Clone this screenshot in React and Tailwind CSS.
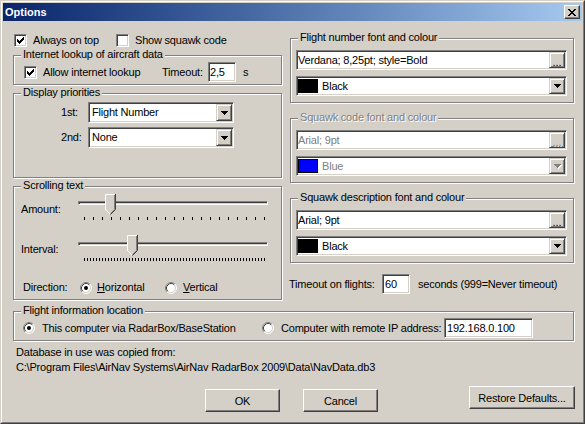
const SUNKEN =
  "bg-white border border-t-[#808080] border-l-[#808080] border-r-white border-b-white shadow-[inset_1px_1px_0_#404040,inset_-1px_-1px_0_#D4D0C8]";
const RAISED_SMALL =
  "bg-[#D4D0C8] border border-t-[#D4D0C8] border-l-[#D4D0C8] border-r-[#404040] border-b-[#404040] shadow-[inset_1px_1px_0_#fff,inset_-1px_-1px_0_#808080]";
const BUTTON =
  "bg-[#D4D0C8] border border-t-white border-l-white border-r-[#404040] border-b-[#404040] shadow-[inset_-1px_-1px_0_#808080]";

function Check({ checked }) {
  return (
    <div className="w-[13px] h-[13px] shrink-0 bg-white border border-t-[#808080] border-l-[#808080] border-r-white border-b-white shadow-[inset_1px_1px_0_#404040,inset_-1px_-1px_0_#D4D0C8]">
      {checked && (
        <svg width="11" height="11" viewBox="0 0 11 11" shapeRendering="crispEdges" className="block">
          <path
            d="M2 4h1v3h-1z M3 5h1v3h-1z M4 6h1v3h-1z M5 5h1v3h-1z M6 4h1v3h-1z M7 3h1v3h-1z M8 2h1v3h-1z"
            fill="#000"
          />
        </svg>
      )}
    </div>
  );
}

function Radio({ checked }) {
  return (
    <svg width="12" height="12" viewBox="0 0 12 12" className="shrink-0 block">
      <circle cx="6" cy="6" r="5" fill="#fff" />
      <path d="M2.11 9.89A5.5 5.5 0 0 1 9.89 2.11" stroke="#808080" fill="none" />
      <path d="M9.89 2.11A5.5 5.5 0 0 1 2.11 9.89" stroke="#fff" fill="none" />
      <path d="M2.82 9.18A4.5 4.5 0 0 1 9.18 2.82" stroke="#404040" fill="none" />
      <path d="M9.18 2.82A4.5 4.5 0 0 1 2.82 9.18" stroke="#D4D0C8" fill="none" />
      {checked && <circle cx="6" cy="6" r="2" fill="#000" />}
    </svg>
  );
}

function Arrow({ disabled }) {
  const d = "M0 0h7v1h-7z M1 1h5v1h-5z M2 2h3v1h-3z M3 3h1v1h-1z";
  return (
    <svg width="8" height="5" viewBox="0 0 8 5" shapeRendering="crispEdges" className="block">
      {disabled && <path d={d} fill="#fff" transform="translate(1 1)" />}
      <path d={d} fill={disabled ? "#808080" : "#000"} />
    </svg>
  );
}

function DropBtn({ disabled }) {
  return (
    <div className={`${RAISED_SMALL} w-[16px] self-stretch flex items-center justify-center pl-[1px] pt-[1px]`}>
      <Arrow disabled={disabled} />
    </div>
  );
}

function Group({ label, className, disabled, children }) {
  return (
    <div
      className={`relative border border-[#808080] shadow-[inset_1px_1px_0_#fff,1px_1px_0_#fff] ${className}`}
    >
      <span
        className={`absolute left-[7px] top-[-8px] px-[2px] bg-[#D4D0C8] leading-[13px] whitespace-nowrap ${
          disabled ? "text-[#808080] [text-shadow:1px_1px_0_#fff]" : ""
        }`}
      >
        {label}
      </span>
      {children}
    </div>
  );
}

function Edit({ className, children }) {
  return <div className={`${SUNKEN} flex items-center pl-[1px] ${className}`}>{children}</div>;
}

function Combo({ className, children }) {
  return (
    <div className={`${SUNKEN} p-[1px] flex items-center ${className}`}>
      <span className="flex-1 pl-[2px]">{children}</span>
      <DropBtn />
    </div>
  );
}

function FontGroup({ label, className, disabled, text, swatch, colorName }) {
  return (
    <Group label={label} className={`h-[65px] ${className}`} disabled={disabled}>
      <div className="pt-[11px] pl-[5px] flex flex-col">
        <div className={`${SUNKEN} w-[271px] h-[20px] p-[1px] flex items-center`}>
          <span className={`flex-1 ${disabled ? "text-[#808080]" : ""}`}>{text}</span>
          <div className={`${RAISED_SMALL} w-[16px] self-stretch flex items-end justify-center pb-[1px]`}>
            <span
              className={`leading-[8px] tracking-[0px] ${
                disabled ? "text-[#808080] [text-shadow:1px_1px_0_#fff]" : ""
              }`}
            >
              ...
            </span>
          </div>
        </div>
        <div className={`${SUNKEN} mt-[6px] w-[271px] h-[20px] p-[1px] flex items-center`}>
          <div className={`w-[20px] h-[14px] border border-black ${swatch}`} />
          <span className={`ml-[4px] flex-1 ${disabled ? "text-[#808080]" : ""}`}>{colorName}</span>
          <DropBtn disabled={disabled} />
        </div>
      </div>
    </Group>
  );
}

function Thumb({ className }) {
  return (
    <svg width="11" height="21" viewBox="0 0 11 21" className={`absolute top-0 block ${className}`}>
      <path d="M0 0H11V16L5.5 21L0 16Z" fill="#D4D0C8" />
      <path d="M0.5 16V0.5H10" stroke="#fff" fill="none" />
      <path d="M0.5 15.5L5 20" stroke="#fff" fill="none" />
      <path d="M10.5 0V15.5L5.5 20.5" stroke="#404040" fill="none" />
      <path d="M9.5 1V15.5L5.5 19.5" stroke="#808080" fill="none" />
    </svg>
  );
}

function Slider({ thumbClass, ticks }) {
  return (
    <div className="relative w-[190px] h-[27px] flex flex-col">
      <div className="mt-[7px] h-[4px] w-full border border-t-[#808080] border-l-[#808080] border-r-white border-b-white shadow-[inset_1px_1px_0_#404040]" />
      <div className="mt-[12px] ml-[6px] w-[181px] flex justify-between">
        {Array.from({ length: ticks }).map((_, i) => (
          <div key={i} className="w-[1px] h-[3px] bg-black" />
        ))}
      </div>
      <Thumb className={thumbClass} />
    </div>
  );
}

export default function App() {
  return (
    <div className="w-[585px] h-[424px] bg-[#D4D0C8] border border-t-[#D4D0C8] border-l-[#D4D0C8] border-r-[#404040] border-b-[#404040] font-['Liberation_Sans',Arial,sans-serif] text-[11px] leading-[13px] tracking-[-0.2px] text-black overflow-hidden">
      <div className="h-full border border-t-white border-l-white border-r-[#808080] border-b-[#808080] p-[1px] flex flex-col">
        {/* Title bar */}
        <div className="h-[18px] shrink-0 flex items-center bg-linear-to-r from-[#0A246A] to-[#A6CAF0] pl-[2px] pr-[2px]">
          <span className="flex-1 font-bold text-white tracking-normal">Options</span>
          <div className={`${BUTTON} w-[16px] h-[14px] flex items-center justify-center`}>
            <svg width="8" height="7" viewBox="0 0 8 7" shapeRendering="crispEdges" className="block">
              <path
                d="M0 0h2v1h-2z M6 0h2v1h-2z M1 1h2v1h-2z M5 1h2v1h-2z M2 2h4v1h-4z M3 3h2v1h-2z M2 4h4v1h-4z M1 5h2v1h-2z M5 5h2v1h-2z M0 6h2v1h-2z M6 6h2v1h-2z"
                fill="#000"
              />
            </svg>
          </div>
        </div>

        {/* Client area */}
        <div className="flex-1 pl-[10px] pr-[8px] flex flex-col">
          <div className="flex items-start gap-[8px]">
            {/* Left column */}
            <div className="w-[269px] shrink-0 flex flex-col">
              <div className="mt-[13px] h-[13px] flex items-center">
                <div className="ml-[1px] w-[102px] flex items-center">
                  <Check checked />
                  <span className="ml-[6px]">Always on top</span>
                </div>
                <div className="flex items-center">
                  <Check />
                  <span className="ml-[6px]">Show squawk code</span>
                </div>
              </div>

              <Group label="Internet lookup of aircraft data" className="mt-[8px] h-[30px]">
                <div className="pt-[6px] pl-[10px]">
                  <div className="h-[20px] flex items-center">
                    <div className="w-[138px] flex items-center">
                      <Check checked />
                      <span className="ml-[6px]">Allow internet lookup</span>
                    </div>
                    <span className="w-[46px]">Timeout:</span>
                    <Edit className="w-[28px] h-[20px]">2,5</Edit>
                    <span className="ml-[7px]">s</span>
                  </div>
                </div>
              </Group>

              <Group label="Display priorities" className="mt-[8px] h-[85px]">
                <div className="pt-[8px] pl-[47px] flex flex-col gap-[4px]">
                  <div className="flex items-center">
                    <span className="w-[27px]">1st:</span>
                    <Combo className="w-[146px] h-[21px]">Flight Number</Combo>
                  </div>
                  <div className="flex items-center">
                    <span className="w-[27px]">2nd:</span>
                    <Combo className="w-[146px] h-[21px]">None</Combo>
                  </div>
                </div>
              </Group>

              <Group label="Scrolling text" className="mt-[8px] h-[114px]">
                <div className="pt-[7px] pl-[7px] flex flex-col">
                  <div className="flex items-start">
                    <span className="w-[57px] mt-[9px]">Amount:</span>
                    <Slider thumbClass="left-[27px]" ticks={21} />
                  </div>
                  <div className="flex items-start mt-[14px]">
                    <span className="w-[57px] mt-[8px]">Interval:</span>
                    <Slider thumbClass="left-[49px]" ticks={61} />
                  </div>
                  <div className="mt-[19px] h-[13px] pl-[2px] flex items-center">
                    <span className="w-[57px]">Direction:</span>
                    <div className="w-[85px] flex items-center">
                      <Radio checked />
                      <span className="ml-[5px]">
                        <span className="underline">H</span>orizontal
                      </span>
                    </div>
                    <div className="flex items-center">
                      <Radio />
                      <span className="ml-[6px]">
                        <span className="underline">V</span>ertical
                      </span>
                    </div>
                  </div>
                </div>
              </Group>
            </div>

            {/* Right column */}
            <div className="w-[284px] shrink-0 flex flex-col">
              <FontGroup
                label="Flight number font and colour"
                className="mt-[17px]"
                text="Verdana; 8,25pt; style=Bold"
                swatch="bg-black"
                colorName="Black"
              />
              <FontGroup
                label="Squawk code font and colour"
                className="mt-[15px]"
                disabled
                text="Arial; 9pt"
                swatch="bg-[#0000FF]"
                colorName="Blue"
              />
              <FontGroup
                label="Squawk description font and colour"
                className="mt-[15px]"
                text="Arial; 9pt"
                swatch="bg-black"
                colorName="Black"
              />
              <div className="mt-[11px] -ml-[1px] h-[20px] flex items-center">
                <span className="w-[93px]">Timeout on flights:</span>
                <Edit className="w-[28px] h-[20px] pl-[2px]">60</Edit>
                <span className="ml-[8px]">seconds (999=Never timeout)</span>
              </div>
            </div>
          </div>

          {/* Flight information location */}
          <Group label="Flight information location" className="mt-[11px] h-[30px]">
            <div className="pt-[6px] pl-[9px]">
              <div className="h-[20px] flex items-center">
                <div className="w-[239px] flex items-center">
                  <Radio checked />
                  <span className="ml-[7px]">This computer via RadarBox/BaseStation</span>
                </div>
                <Radio />
                <span className="ml-[7px] w-[163px]">Computer with remote IP address:</span>
                <Edit className="w-[89px] h-[20px] pl-[2px]">192.168.0.100</Edit>
              </div>
            </div>
          </Group>

          <div className="mt-[4px] pl-[3px] leading-[15px] flex flex-col">
            <span>Database in use was copied from:</span>
            <span>C:\Program Files\AirNav Systems\AirNav RadarBox 2009\Data\NavData.db3</span>
          </div>

          <div className="mt-[11px] flex items-start">
            <div className={`${BUTTON} ml-[192px] mt-[3px] w-[75px] h-[23px] shrink-0 flex items-center justify-center pt-[1px]`}>
              OK
            </div>
            <div className={`${BUTTON} ml-[23px] mt-[3px] w-[75px] h-[23px] shrink-0 flex items-center justify-center pt-[1px]`}>
              Cancel
            </div>
            <div className={`${BUTTON} ml-[91px] w-[106px] h-[23px] shrink-0 flex items-center justify-center pt-[1px]`}>
              Restore Defaults...
            </div>
          </div>
        </div>
      </div>
    </div>
  );
}
